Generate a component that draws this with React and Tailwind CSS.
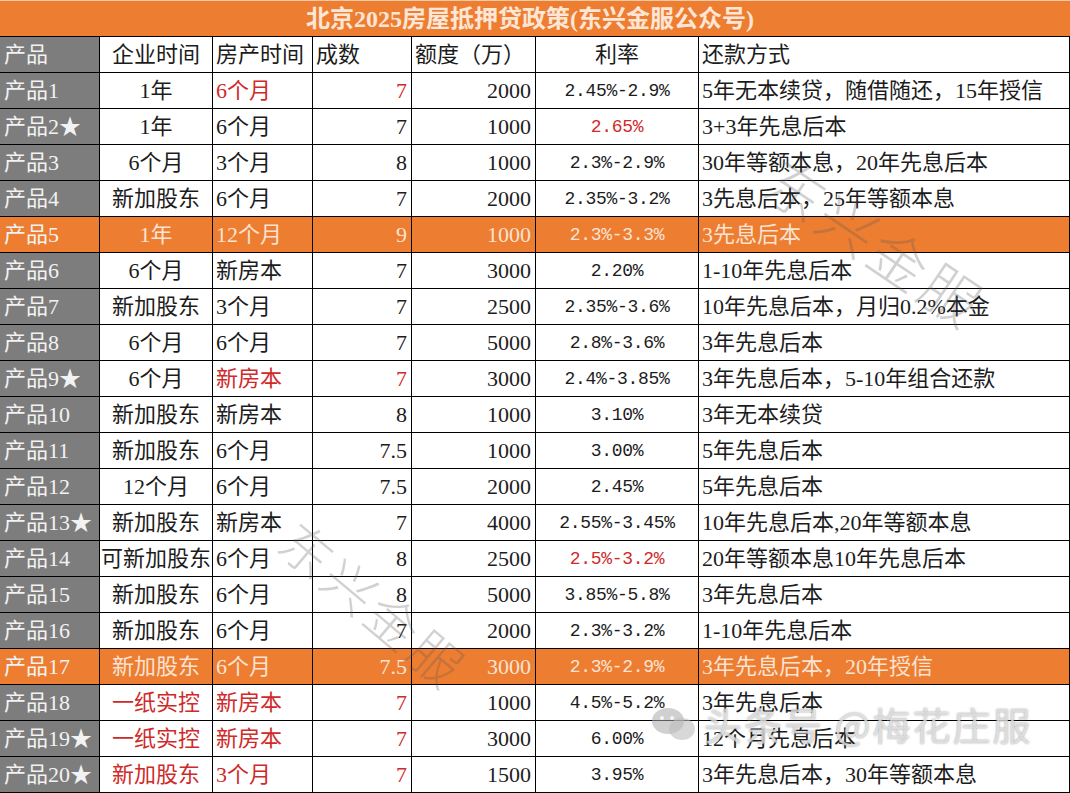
import React from "react";

const R = "r";
const rows = [
  ["产品1", ["1年"], ["6个月", R], ["7", R], "2000", ["2.45%-2.9%"], "5年无本续贷，随借随还，15年授信"],
  ["产品2★", ["1年"], ["6个月"], ["7"], "1000", ["2.65%", R], "3+3年先息后本"],
  ["产品3", ["6个月"], ["3个月"], ["8"], "1000", ["2.3%-2.9%"], "30年等额本息，20年先息后本"],
  ["产品4", ["新加股东"], ["6个月"], ["7"], "2000", ["2.35%-3.2%"], "3先息后本，25年等额本息"],
  ["产品5", ["1年"], ["12个月"], ["9"], "1000", ["2.3%-3.3%"], "3先息后本", "o"],
  ["产品6", ["6个月"], ["新房本"], ["7"], "3000", ["2.20%"], "1-10年先息后本"],
  ["产品7", ["新加股东"], ["3个月"], ["7"], "2500", ["2.35%-3.6%"], "10年先息后本，月归0.2%本金"],
  ["产品8", ["6个月"], ["6个月"], ["7"], "5000", ["2.8%-3.6%"], "3年先息后本"],
  ["产品9★", ["6个月"], ["新房本", R], ["7", R], "3000", ["2.4%-3.85%"], "3年先息后本，5-10年组合还款"],
  ["产品10", ["新加股东"], ["新房本"], ["8"], "1000", ["3.10%"], "3年无本续贷"],
  ["产品11", ["新加股东"], ["6个月"], ["7.5"], "1000", ["3.00%"], "5年先息后本"],
  ["产品12", ["12个月"], ["6个月"], ["7.5"], "2000", ["2.45%"], "5年先息后本"],
  ["产品13★", ["新加股东"], ["新房本"], ["7"], "4000", ["2.55%-3.45%"], "10年先息后本,20年等额本息"],
  ["产品14", ["可新加股东"], ["6个月"], ["8"], "2500", ["2.5%-3.2%", R], "20年等额本息10年先息后本"],
  ["产品15", ["新加股东"], ["6个月"], ["8"], "5000", ["3.85%-5.8%"], "3年先息后本"],
  ["产品16", ["新加股东"], ["6个月"], ["7"], "2000", ["2.3%-3.2%"], "1-10年先息后本"],
  ["产品17", ["新加股东"], ["6个月"], ["7.5"], "3000", ["2.3%-2.9%"], "3年先息后本，20年授信", "o"],
  ["产品18", ["一纸实控", R], ["新房本", R], ["7", R], "1000", ["4.5%-5.2%"], "3年先息后本"],
  ["产品19★", ["一纸实控", R], ["新房本", R], ["7", R], "3000", ["6.00%"], "12个月先息后本"],
  ["产品20★", ["新加股东", R], ["3个月", R], ["7", R], "1500", ["3.95%"], "3年先息后本，30年等额本息"],
];

const serif = "font-['Liberation_Serif','Noto_Sans_CJK_SC',serif]";

function Row({ r }) {
  const orange = r[7] === "o";
  const base = `h-[36px] flex items-center border-b border-r border-black whitespace-nowrap overflow-visible ${orange ? "bg-[#ed7d31]" : "bg-white"}`;
  const col = (c) => (orange ? "text-[#fbe3d3]" : c && c[1] === R ? "text-[#cf2a2a]" : "text-[#1c1c1c]");
  return (
    <>
      <div className={`h-[36px] flex items-center border-b border-r border-black pl-[4px] whitespace-nowrap ${orange ? "bg-[#ed7d31]" : "bg-[#7d7d7d]"} text-[#f2f2f2]`}>{r[0]}</div>
      <div className={`${base} justify-center ${col(r[1])}`}>{r[1][0]}</div>
      <div className={`${base} pl-[3px] ${col(r[2])}`}>{r[2][0]}</div>
      <div className={`${base} justify-end pr-[4px] ${col(r[3])}`}>{r[3][0]}</div>
      <div className={`${base} justify-end pr-[4px] ${col(null)}`}>{r[4]}</div>
      <div className={`${base} justify-center font-['Liberation_Mono',monospace] text-[18px] tracking-[-0.3px] ${col(r[5])}`}>{r[5][0]}</div>
      <div className={`${base} pl-[3px] ${col(null)}`}>{r[6]}</div>
    </>
  );
}

export default function App() {
  const head = "h-[36px] flex items-center border-b border-r border-black bg-white text-[#1c1c1c]";
  return (
    <div className={`relative w-[1070px] h-[793px] overflow-hidden bg-white ${serif} text-[22px] leading-none`}>
      <div className="h-[37px] bg-[#ed7d31] border-b border-black flex items-center justify-center font-bold text-[24px] text-[#fde6d6] pt-[1px] pr-[10px] border-t border-t-[#f6c8a8]">
        北京2025房屋抵押贷政策(东兴金服公众号)
      </div>
      <div className="grid grid-cols-[100px_113px_100px_99px_124px_163px_1fr]">
        <div className="h-[36px] flex items-center border-b border-r border-black bg-[#7d7d7d] text-[#f2f2f2] pl-[4px]">产品</div>
        <div className={`${head} justify-center`}>企业时间</div>
        <div className={`${head} pl-[3px]`}>房产时间</div>
        <div className={`${head} pl-[3px]`}>成数</div>
        <div className={`${head} pl-[3px]`}>额度（万）</div>
        <div className={`${head} justify-center`}>利率</div>
        <div className={`${head} pl-[3px]`}>还款方式</div>
        {rows.map((r, i) => (
          <Row key={i} r={r} />
        ))}
      </div>

      <div className="absolute left-[790px] top-[148px] rotate-[34deg] origin-top-left text-[58px] font-light text-[rgba(90,90,90,0.28)] tracking-[4px] pointer-events-none font-['Noto_Sans_CJK_SC',sans-serif]">
        东兴金服
      </div>
      <div className="absolute left-[305px] top-[512px] rotate-[40deg] origin-top-left text-[52px] font-light text-[rgba(90,90,90,0.28)] tracking-[4px] pointer-events-none font-['Noto_Sans_CJK_SC',sans-serif]">
        东兴金服
      </div>

      <div className="absolute left-[650px] top-[704px] flex items-center gap-[6px] pointer-events-none">
        <svg width="48" height="40" viewBox="0 0 48 40">
          <ellipse cx="18" cy="17" rx="16" ry="13" fill="rgba(170,170,170,0.55)" />
          <ellipse cx="32" cy="25" rx="13" ry="11" fill="rgba(190,190,190,0.6)" />
          <circle cx="12" cy="14" r="2" fill="rgba(255,255,255,0.8)" />
          <circle cx="22" cy="14" r="2" fill="rgba(255,255,255,0.8)" />
        </svg>
        <span className="text-[38px] font-['Noto_Sans_CJK_SC',sans-serif] text-[rgba(245,245,245,0.7)] [text-shadow:0_0_2px_rgba(80,80,80,0.6)] tracking-[2px]">
          头条号 @梅花庄服
        </span>
      </div>
    </div>
  );
}
